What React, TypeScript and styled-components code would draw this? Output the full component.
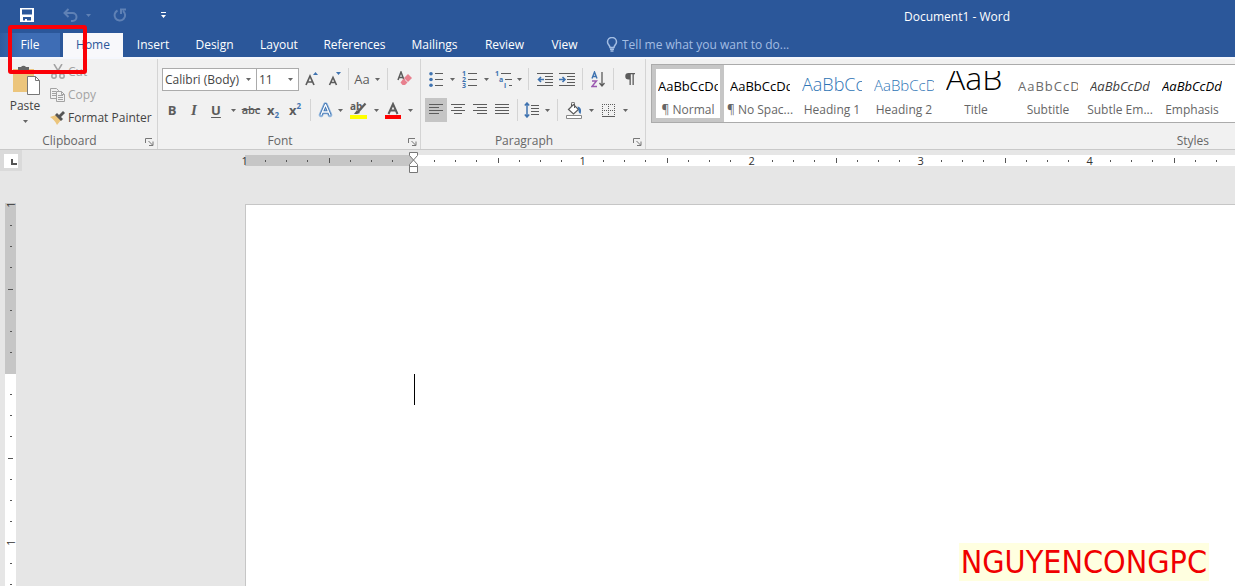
import React from 'react';
import styled, { createGlobalStyle, css } from 'styled-components';

const ui = `"Open Sans", "Noto Sans", sans-serif`;
const ink = '#444444';
const blue = '#2b579a';
const iconBlue = '#3f73b0';
const iconGray = '#5c5c5c';

const GlobalStyle = createGlobalStyle`
  *, *::before, *::after { box-sizing: border-box; }
  body { margin: 0; font-family: ${ui}; font-size: 12px; color: ${ink}; background: #e6e6e6; }
  button, input, select { font: inherit; color: inherit; border: 0; padding: 0; margin: 0; background: none; }
  svg { display: block; flex: none; }
`;

const Window = styled.div`
  position: relative;
  display: flex;
  flex-direction: column;
  min-height: 100vh;
  overflow: hidden;
`;

/* Title bar */
const TitleBar = styled.header`
  display: flex;
  align-items: center;
  height: 33px;
  padding: 0 225px 0 16px;
  background: ${blue};
  color: #fff;
`;
const QuickAccess = styled.div`
  display: flex;
  align-items: center;
  gap: 6px;
  padding-bottom: 3px;
`;
const QuickButton = styled.button<{ $dim?: boolean; $w?: number }>`
  display: flex;
  align-items: center;
  justify-content: center;
  width: ${(p) => p.$w ?? 22}px;
  height: 22px;
  color: ${(p) => (p.$dim ? '#5f81b5' : '#fff')};
`;
const WindowTitle = styled.h1`
  margin: 0 0 0 auto;
  font-size: 12px;
  line-height: 16px;
  font-weight: 400;
  white-space: nowrap;
`;

/* Tabs */
const TabBar = styled.nav`
  display: flex;
  height: 24px;
  background: ${blue};
  color: #fff;
`;
const Tab = styled.button<{ $active?: boolean; $w: number }>`
  width: ${(p) => p.$w}px;
  height: 24px;
  line-height: 22px;
  text-align: center;
  white-space: nowrap;
  ${(p) => p.$active && css`background: #f8f8fb; color: ${blue};`}
`;
const FileTab = styled(Tab)`
  margin-right: 3px;
  background: linear-gradient(to right, #2f5c9f, #3e6db5 20px);
`;
const TellMe = styled.label`
  display: flex;
  align-items: center;
  gap: 4px;
  padding: 0 0 2px 14px;
  color: #a3bde3;
  input { width: 200px; height: 20px; outline: 0; }
  input::placeholder { color: #a3bde3; opacity: 1; }
`;

/* Ribbon */
const Ribbon = styled.section`
  display: flex;
  height: 93px;
  background: #f1f1f1;
  border-top: 2px solid #f5f7fd;
  border-bottom: 1px solid #c9c9c9;
`;
const Group = styled.div<{ $w?: number }>`
  display: flex;
  flex-direction: column;
  flex: ${(p) => (p.$w ? `0 0 ${p.$w}px` : '1 0 0')};
  min-width: 0;
  padding: 9px 0 0 4px;
  border-right: ${(p) => (p.$w ? '1px solid #d4d4d4' : '0')};
`;
const GroupLabel = styled.div`
  display: grid;
  grid-template-columns: 1fr auto;
  column-gap: 10px;
  align-items: center;
  margin-top: auto;
  padding-right: 3px;
  height: 16px;
  line-height: 16px;
  text-align: center;
  color: #666;
`;
const Row = styled.div`
  display: flex;
  align-items: center;
  height: 22px;
  & + & { margin-top: 9px; }
`;
const Tool = styled.button<{ $w?: number; $on?: boolean }>`
  display: flex;
  align-items: center;
  justify-content: center;
  width: ${(p) => p.$w ?? 22}px;
  height: 24px;
  font-size: 13px;
  line-height: 20px;
  color: ${iconGray};
  background: ${(p) => (p.$on ? '#c5c5c5' : 'transparent')};
`;
const Bold = styled(Tool)`font-weight: 700;`;
const Italic = styled(Tool)`font-family: "Liberation Serif", serif; font-style: italic; font-weight: 700; font-size: 15px;`;
const Underline = styled(Tool)`font-weight: 700; text-decoration: underline; text-underline-offset: 2px;`;
const Strike = styled(Tool)`font-size: 11px; font-weight: 600; text-decoration: line-through;`;
const Script = styled(Tool)`
  font-weight: 700;
  sub, sup { font-size: 8px; line-height: 8px; color: ${iconBlue}; }
  sub { align-self: flex-end; padding-bottom: 3px; }
  sup { align-self: flex-start; padding-top: 4px; }
`;
const Divider = styled.span<{ $m?: number }>`
  width: 1px;
  height: 22px;
  margin: 0 ${(p) => p.$m ?? 4}px;
  background: #d4d4d4;
`;
const SelectBox = styled.label<{ $w: number }>`
  display: grid;
  align-items: center;
  width: ${(p) => p.$w}px;
  height: 23px;
  border: 1px solid #ababab;
  background: #fff;
  & + & { border-left: 0; }
  select { grid-area: 1 / 1; width: 100%; height: 21px; padding-left: 2px; appearance: none; outline: 0; }
  svg { grid-area: 1 / 1; justify-self: end; margin-right: 5px; pointer-events: none; }
`;

/* Clipboard */
const ClipboardBody = styled.div`
  display: flex;
  gap: 4px;
`;
const PasteButton = styled.button`
  display: flex;
  flex-direction: column;
  align-items: center;
  width: 42px;
  margin-top: -4px;
  line-height: 16px;
`;
const PasteText = styled.span`margin: 2px 0 6px;`;
const ClipList = styled.div`
  display: flex;
  flex-direction: column;
  margin-top: -8px;
`;
const ClipItem = styled.button<{ $off?: boolean }>`
  display: flex;
  align-items: center;
  gap: 2px;
  height: 23px;
  white-space: nowrap;
  color: ${(p) => (p.$off ? '#a3a3a3' : ink)};
`;

/* Styles gallery */
const Gallery = styled.div`
  display: flex;
  height: 59px;
  margin: -4px 0 0 1px;
  overflow: hidden;
  border: 1px solid #ababab;
  border-right: 0;
  background: #fff;
`;
const StyleCard = styled.button<{ $on?: boolean }>`
  display: flex;
  flex-direction: column;
  align-items: center;
  justify-content: flex-end;
  flex: 0 0 72px;
  min-width: 0;
  height: 57px;
  border: 4px solid ${(p) => (p.$on ? '#c6c6c6' : 'transparent')};
  line-height: 16px;
  color: #666;
  white-space: nowrap;
`;
const Sample = styled.span<{ $size: number; $color: string; $light?: boolean; $italic?: boolean; $spaced?: boolean }>`
  display: flex;
  align-items: flex-end;
  width: 60px;
  height: 31px;
  overflow: hidden;
  font-size: ${(p) => p.$size}px;
  line-height: ${(p) => Math.round(p.$size * 0.8 + 22)}px;
  color: ${(p) => p.$color};
  font-weight: ${(p) => (p.$light ? 300 : 400)};
  font-style: ${(p) => (p.$italic ? 'italic' : 'normal')};
  letter-spacing: ${(p) => (p.$spaced ? '1px' : 'normal')};
`;
const StylesLabel = styled(GroupLabel)`
  grid-template-columns: 1fr;
  padding-right: 26px;
  text-align: right;
`;

/* Workspace */
const Workspace = styled.main`
  display: grid;
  grid-template-columns: 234px minmax(0, 1fr);
  grid-template-rows: 54px 1fr;
  flex: 1;
`;
const Corner = styled.div`
  grid-area: 1 / 1;
  width: 22px;
  height: 21px;
  padding: 4px;
  background: #dadada;
`;
const TabStop = styled.button`
  display: flex;
  align-items: flex-end;
  justify-content: flex-end;
  width: 14px;
  height: 14px;
  padding: 0 1px 3px 0;
  background: #fff;
`;
const RulerSlot = styled.div`
  grid-area: 1 / 2;
  position: relative;
  overflow: hidden;
`;
const HRuler = styled.div`
  display: flex;
  height: 11px;
  margin-top: 5px;
  background: linear-gradient(to right, transparent 11px, #c6c6c6 11px 180px, #fff 180px);
`;
const HUnit = styled.div`
  display: flex;
  flex: 0 0 169px;
`;
const VRuler = styled.div`
  grid-area: 2 / 1;
  display: flex;
  flex-direction: column;
  width: 11px;
  height: 0;
  min-height: calc(100% + 10px);
  margin: -10px 0 0 5px;
  overflow: hidden;
  background: linear-gradient(to bottom, transparent 9px, #c6c6c6 9px 180px, #fff 180px);
`;
const VUnit = styled.div`
  display: flex;
  flex-direction: column;
  flex: 0 0 169px;
`;
const Mark = styled.span`
  display: flex;
  flex: 1 1 0;
  align-items: center;
  justify-content: center;
  min-width: 0;
  min-height: 0;
  font-size: 11px;
  line-height: 11px;
  color: #333;
`;
const Tick = styled.i<{ $x: number; $y: number }>`
  width: ${(p) => p.$x}px;
  height: ${(p) => p.$y}px;
  background: #555;
`;
const Turned = styled.span`transform: rotate(-90deg);`;
const IndentMarker = styled.div`
  position: absolute;
  left: 175px;
  top: 2px;
`;
const Page = styled.article`
  grid-area: 2 / 2;
  min-height: 382px;
  margin-left: 11px;
  padding: 169px 0 0 168px;
  background: #fff;
  border-top: 1px solid #c6c6c6;
  border-left: 1px solid #c6c6c6;
`;
const Caret = styled.div`
  width: 1px;
  height: 31px;
  background: #000;
`;

/* Overlays */
const Highlight = styled.div`
  position: absolute;
  left: 8px;
  top: 25px;
  width: 79px;
  height: 49px;
  border: 4px solid #fb0007;
  border-radius: 3px;
  pointer-events: none;
`;
const Watermark = styled.div`
  position: absolute;
  right: 26px;
  bottom: 5px;
  padding: 0 2px;
  font-family: "DejaVu Sans Condensed", "DejaVu Sans", sans-serif;
  font-size: 32px;
  line-height: 38px;
  color: #f00000;
  background: #ffffe0;
`;

const Down = ({ color = '#666' }: { color?: string }) => (
  <svg width="5" height="3" viewBox="0 0 5 3"><path d="M0 0h5L2.500 3z" fill={color} /></svg>
);
const DropDown = ({ w = 12, label }: { w?: number; label: string }) => (
  <Tool $w={w} aria-label={label}><Down /></Tool>
);
const Launcher = ({ label }: { label: string }) => (
  <button aria-label={label}>
    <svg width="9" height="9" viewBox="0 0 9 9" fill="none" stroke="#777"><path d="M.5 6V1.500H7M3.500 4l4 4M8 4.500V8.500H4" /></svg>
  </button>
);

const Lines = ({ rows }: { rows: [number, number][] }) => (
  <svg width="14" height="12" viewBox="0 0 14 12" stroke={iconGray}>
    {rows.map(([a, b], i) => <path key={i} d={`M${a} ${i * 3 + 0.5}H${b}`} />)}
  </svg>
);

const styleData = [
  { name: '¶ Normal', size: 13, color: '#000', on: true },
  { name: '¶ No Spac...', size: 13, color: '#000' },
  { name: 'Heading 1', size: 18, color: '#2e74b5', light: true },
  { name: 'Heading 2', size: 15, color: '#2e74b5', light: true },
  { name: 'Title', size: 32, color: '#000', light: true, text: 'AaB' },
  { name: 'Subtitle', size: 13, color: '#6a6a6a', spaced: true },
  { name: 'Subtle Em...', size: 13, color: '#404040', italic: true },
  { name: 'Emphasis', size: 13, color: '#000', italic: true },
];

const marks = [1, 2, 3, 4, 5, 6, 7];
const hLabels = ['1', '', '1', '2', '3', '4', '5', '6', '7', '8', '9', '10'];
const vLabels = ['1', '', '1', '2', '3', '4', '5', '6'];

export default function App() {
  return (
    <Window>
      <GlobalStyle />
      <TitleBar>
        <QuickAccess>
          <QuickButton aria-label="Save">
            <svg width="14" height="14" viewBox="0 0 14 14"><path fill="#fff" fillRule="evenodd" d="M0 0h14v14H0zM2 1.500v5h10v-5zM3 9v3.500h2V11h2v1.500h4V9z" /></svg>
          </QuickButton>
          <QuickButton $dim $w={66} aria-label="Undo">
            <svg width="28" height="14" viewBox="0 0 28 14" fill="none" stroke="currentColor" strokeWidth="2"><path d="M5.500 1L1.500 5l4 4M2 5h7.500a3.800 3.800 0 0 1 0 8H8" /><path d="M23 6h5l-2.500 3z" fill="currentColor" stroke="none" /></svg>
          </QuickButton>
          <QuickButton $dim $w={8} aria-label="Repeat">
            <svg width="14" height="14" viewBox="0 0 14 14" fill="none" stroke="currentColor" strokeWidth="2"><path d="M4.500 2.500A5.300 5.300 0 1 0 10 3M8 6V1.500h5" /></svg>
          </QuickButton>
          <QuickButton $w={66} aria-label="Customize Quick Access Toolbar">
            <svg width="5" height="6" viewBox="0 0 5 6" fill="#fff"><path d="M0 0h5v1H0zM0 3h5L2.500 6z" /></svg>
          </QuickButton>
        </QuickAccess>
        <WindowTitle>Document1 - Word</WindowTitle>
      </TitleBar>

      <TabBar>
        <FileTab $w={60}>File</FileTab>
        <Tab $w={60} $active>Home</Tab>
        <Tab $w={60}>Insert</Tab>
        <Tab $w={63}>Design</Tab>
        <Tab $w={66}>Layout</Tab>
        <Tab $w={85}>References</Tab>
        <Tab $w={75}>Mailings</Tab>
        <Tab $w={65}>Review</Tab>
        <Tab $w={55}>View</Tab>
        <TellMe>
          <svg width="12" height="15" viewBox="0 0 12 15" fill="none" stroke="currentColor" strokeWidth="1.500"><path d="M4 10.500C4 8.500 1.500 7.500 1.500 5a4.500 4.500 0 0 1 9 0C10.500 7.500 8 8.500 8 10.500zM4 12.200h4M4.500 14h3" /></svg>
          <input aria-label="Tell me" placeholder="Tell me what you want to do..." />
        </TellMe>
      </TabBar>

      <Ribbon>
        <Group $w={158}>
          <ClipboardBody>
            <PasteButton>
              <svg width="30" height="32" viewBox="0 0 30 32">
                <path d="M3 5h21v23H3z" fill="#ecc57c" />
                <path d="M8 7V3h3a3 3 0 0 1 5 0h3v4z" fill="#666" />
                <path d="M17.500 12.500h8l4 4v14h-12z" fill="#fff" stroke="#777" />
                <path d="M25.500 12.500v4h4" fill="none" stroke="#777" />
              </svg>
              <PasteText>Paste</PasteText>
              <Down />
            </PasteButton>
            <ClipList>
              <ClipItem $off>
                <svg width="16" height="15" viewBox="-1 0 16 15" fill="none" stroke="#a3a3a3" strokeWidth="1.500"><path d="M3 0l6 10M11 0L5 10" /><circle cx="3" cy="12" r="2.200" /><circle cx="11" cy="12" r="2.200" /></svg>
                Cut
              </ClipItem>
              <ClipItem $off>
                <svg width="16" height="14" viewBox="0 0 16 14" fill="#f1f1f1" stroke="#a3a3a3"><path d="M.5.5h6l2 2v8h-8zM2 3.500h4M2 5.500h4M2 7.500h4" /><path d="M6.500 3.500h5l3 3v7h-8zM8 7.500h5M8 9.500h5M8 11.500h5M11.500 3.500v3h3" /></svg>
                Copy
              </ClipItem>
              <ClipItem>
                <svg width="16" height="14" viewBox="0 0 16 14"><path d="M0 6l6-2 5 5-4 5C5 10 3 8 0 6z" fill="#ecc57c" /><path d="M5 4l2-2 2 2 4-4 2 2-4 4 2 2-2 2z" fill="#555" /></svg>
                Format Painter
              </ClipItem>
            </ClipList>
          </ClipboardBody>
          <GroupLabel>Clipboard<Launcher label="Clipboard settings" /></GroupLabel>
        </Group>

        <Group $w={263}>
          <Row>
            <SelectBox $w={95}><select aria-label="Font"><option>Calibri (Body)</option></select><Down /></SelectBox>
            <SelectBox $w={42}><select aria-label="Font size"><option>11</option></select><Down /></SelectBox>
            <Tool $w={26} aria-label="Grow font">
              <svg width="14" height="14" viewBox="0 0 14 14"><path d="M1 13L5 4l4 9M2.500 10h5" fill="none" stroke={iconGray} strokeWidth="1.700" /><path d="M8 3l2.500-3L13 3z" fill={iconBlue} /></svg>
            </Tool>
            <Tool $w={20} aria-label="Shrink font">
              <svg width="14" height="14" viewBox="0 0 14 14"><path d="M1.500 13L5 5.500 8.500 13M3 10.500h4" fill="none" stroke={iconGray} strokeWidth="1.600" /><path d="M8 0h5l-2.500 3z" fill={iconBlue} /></svg>
            </Tool>
            <Divider $m={3} />
            <Tool $w={20}>Aa</Tool>
            <DropDown w={10} label="Change case" />
            <Divider $m={5} />
            <Tool aria-label="Clear formatting">
              <svg width="15" height="16" viewBox="0 0 15 16"><path d="M1 9l3-8 3 8M2 6.500h4" fill="none" stroke={iconGray} strokeWidth="1.500" /><path d="M11 3l4 4-4 4-4-4z" fill="#e8808e" /><path d="M6.500 7.500l4 4-2.500 2.500H5.500L3.500 11.500z" fill="#e8808e" /></svg>
            </Tool>
          </Row>
          <Row>
            <Bold $w={20}>B</Bold>
            <Italic $w={24}>I</Italic>
            <Underline $w={20}>U</Underline>
            <DropDown w={14} label="Underline style" />
            <Strike>abc</Strike>
            <Script>x<sub>2</sub></Script>
            <Script>x<sup>2</sup></Script>
            <Divider />
            <Tool $w={20} aria-label="Text effects">
              <svg width="15" height="16" viewBox="0 0 15 16" fill="none" strokeLinejoin="round"><path d="M3 13L7.500 2.500 12 13M4.700 10h5.600" stroke="#8fb4dc" strokeWidth="4.500" strokeLinecap="round" /><path d="M3 13L7.500 2.500 12 13M4.700 10h5.600" stroke={iconBlue} strokeWidth="3" /><path d="M3 13L7.500 2.500 12 13M4.700 10h5.600" stroke="#fff" strokeWidth="1.300" /></svg>
            </Tool>
            <DropDown w={10} label="Effects list" />
            <Tool $w={26} aria-label="Highlight">
              <svg width="17" height="17" viewBox="0 0 17 17"><text x="0" y="8" fontSize="10" fontWeight="700" fill={iconGray}>ab</text><path d="M15.500 1.500L8 10" stroke={iconGray} strokeWidth="2.200" /><path d="M4 12l3-4 3 3-3 1z" fill={iconGray} /><path d="M0 13h17v4H0z" fill="#ff0" /></svg>
            </Tool>
            <DropDown w={10} label="Highlight colors" />
            <Tool $w={24} aria-label="Font color">
              <svg width="16" height="17" viewBox="0 0 16 17"><path d="M3.500 12L8 2l4.500 10M5.200 8.500h5.600" fill="none" stroke={iconGray} strokeWidth="2" /><path d="M0 13h16v4H0z" fill="red" /></svg>
            </Tool>
            <DropDown w={10} label="Font colors" />
          </Row>
          <GroupLabel>Font<Launcher label="Font settings" /></GroupLabel>
        </Group>

        <Group $w={225}>
          <Row>
            <Tool aria-label="Bullets">
              <svg width="14" height="15" viewBox="0 0 14 15" stroke={iconGray}><path d="M6 1.500h8M6 7.500h8M6 13.500h8" /><g fill={iconBlue} stroke="none"><circle cx="2" cy="1.800" r="1.800" /><circle cx="2" cy="7.500" r="1.800" /><circle cx="2" cy="13.200" r="1.800" /></g></svg>
            </Tool>
            <DropDown w={10} label="Bullet library" />
            <Tool $w={24} aria-label="Numbering">
              <svg width="15" height="17" viewBox="0 0 15 17"><path d="M6 2.500h9M6 8.500h9M6 14.500h9" stroke={iconGray} /><g fontSize="7" fontWeight="700" fill={iconBlue}><text x="0" y="5">1</text><text x="0" y="11">2</text><text x="0" y="17">3</text></g></svg>
            </Tool>
            <DropDown w={10} label="Numbering library" />
            <Tool $w={24} aria-label="Multilevel list">
              <svg width="17" height="17" viewBox="0 0 17 17"><path d="M6 2.500h10M10 8.500h7M14 14.500h3" stroke={iconGray} /><g fontSize="7" fontWeight="700" fill={iconBlue}><text x="0" y="5">1</text><text x="4" y="11">a</text><text x="9" y="17">i</text></g></svg>
            </Tool>
            <DropDown w={8} label="List library" />
            <Divider $m={5} />
            <Tool aria-label="Decrease indent">
              <svg width="16" height="13" viewBox="0 0 16 13" fill="none" stroke={iconGray}><path d="M0 .5h16M8 3.500h8M8 6.500h8M8 9.500h8M0 12.500h16" /><path d="M7 6.500H1.500M4 4L1.500 6.500 4 9" stroke={iconBlue} strokeWidth="1.600" /></svg>
            </Tool>
            <Tool aria-label="Increase indent">
              <svg width="16" height="13" viewBox="0 0 16 13" fill="none" stroke={iconGray}><path d="M0 .5h16M8 3.500h8M8 6.500h8M8 9.500h8M0 12.500h16" /><path d="M0 6.500h6M3.500 4L6 6.500 3.500 9" stroke={iconBlue} strokeWidth="1.600" /></svg>
            </Tool>
            <Divider />
            <Tool aria-label="Sort">
              <svg width="14" height="17" viewBox="0 0 14 17" fill="none"><path d="M1 7.500L3.500 1 6 7.500M2 5.500h3" stroke={iconBlue} strokeWidth="1.400" /><path d="M1 10h4.500L1 15.500h5" stroke="#9b59b0" strokeWidth="1.400" /><path d="M11 1v14M8.500 12l2.500 3 2.500-3" stroke={iconGray} strokeWidth="1.300" /></svg>
            </Tool>
            <Divider />
            <Tool aria-label="Show formatting marks">
              <svg width="11" height="14" viewBox="0 0 11 14"><path d="M5 1h6v1.200H9.800V13H8.500V2.200H6.800V13H5.500V7.500H4.500a3.200 3.200 0 0 1 0-6.500z" fill={iconGray} /></svg>
            </Tool>
          </Row>
          <Row>
            <Tool $on aria-label="Align left"><Lines rows={[[0, 14], [0, 10], [0, 14], [0, 10]]} /></Tool>
            <Tool aria-label="Center"><Lines rows={[[0, 14], [3, 11], [0, 14], [3, 11]]} /></Tool>
            <Tool aria-label="Align right"><Lines rows={[[0, 14], [4, 14], [0, 14], [4, 14]]} /></Tool>
            <Tool aria-label="Justify"><Lines rows={[[0, 14], [0, 14], [0, 14], [0, 14]]} /></Tool>
            <Divider />
            <Tool $w={20} aria-label="Line spacing">
              <svg width="16" height="16" viewBox="0 0 16 16" fill="none" stroke={iconGray}><path d="M7 3.500h8M7 6.500h8M7 9.500h8M7 12.500h8" /><path d="M3 1v14M.8 3.500L3 1l2.200 2.500M.8 12.500L3 15l2.200-2.500" stroke={iconBlue} strokeWidth="1.500" /></svg>
            </Tool>
            <DropDown w={10} label="Spacing options" />
            <Divider $m={5} />
            <Tool aria-label="Shading">
              <svg width="17" height="17" viewBox="0 0 17 17" fill="none"><path d="M2.500 7.500l5-5 5 5-5 4.500z" stroke={iconGray} fill="#fff" strokeWidth="1.200" /><path d="M5.500 5V1.500a1.500 1.500 0 0 1 3 0V6" stroke={iconGray} /><path d="M11.500 4.500c3 .5 4.500 3 3 7.500-1.500-1-2-2-2-4z" fill={iconBlue} /><path d="M.5 13.500h15v3H.5z" fill="#fff" stroke="#888" /></svg>
            </Tool>
            <DropDown w={12} label="Shading colors" />
            <Tool aria-label="Borders">
              <svg width="13" height="13" viewBox="0 0 13 13" fill="none" stroke={iconGray}><path d="M.5 0v12M12.500 0v12M6.500 0v12M0 .5h13M0 6.500h13" strokeDasharray="1 1" /><path d="M0 12.500h13" /></svg>
            </Tool>
            <DropDown w={12} label="Border options" />
          </Row>
          <GroupLabel>Paragraph<Launcher label="Paragraph settings" /></GroupLabel>
        </Group>

        <Group>
          <Gallery>
            {styleData.map((s) => (
              <StyleCard key={s.name} $on={s.on}>
                <Sample $size={s.size} $color={s.color} $light={s.light} $italic={s.italic} $spaced={s.spaced}>{s.text ?? 'AaBbCcDd'}</Sample>
                {s.name}
              </StyleCard>
            ))}
          </Gallery>
          <StylesLabel>Styles</StylesLabel>
        </Group>
      </Ribbon>

      <Workspace>
        <Corner>
          <TabStop aria-label="Tab stop"><svg width="6" height="6" viewBox="0 0 6 6"><path d="M1 0v5h5" fill="none" stroke="#555" strokeWidth="2" /></svg></TabStop>
        </Corner>
        <RulerSlot>
          <HRuler>
            {hLabels.map((n, i) => (
              <HUnit key={i}>
                <Mark>{n}</Mark>
                {marks.map((m) => <Mark key={m}><Tick $x={1} $y={m === 4 ? 5 : 2} /></Mark>)}
              </HUnit>
            ))}
          </HRuler>
          <IndentMarker>
            <svg width="9" height="22" viewBox="0 0 9 22" fill="#fff" stroke="#777"><path d="M.5.5h8v3l-4 4.500-4-4.500zM4.500 8l4 4.500v2h-8v-2zM.5 14.500h8v6h-8z" /></svg>
          </IndentMarker>
        </RulerSlot>
        <VRuler>
          {vLabels.map((n, i) => (
            <VUnit key={i}>
              <Mark><Turned>{n}</Turned></Mark>
              {marks.map((m) => <Mark key={m}><Tick $x={m === 4 ? 5 : 2} $y={1} /></Mark>)}
            </VUnit>
          ))}
        </VRuler>
        <Page><Caret /></Page>
      </Workspace>

      <Highlight />
      <Watermark>NGUYENCONGPC</Watermark>
    </Window>
  );
}
